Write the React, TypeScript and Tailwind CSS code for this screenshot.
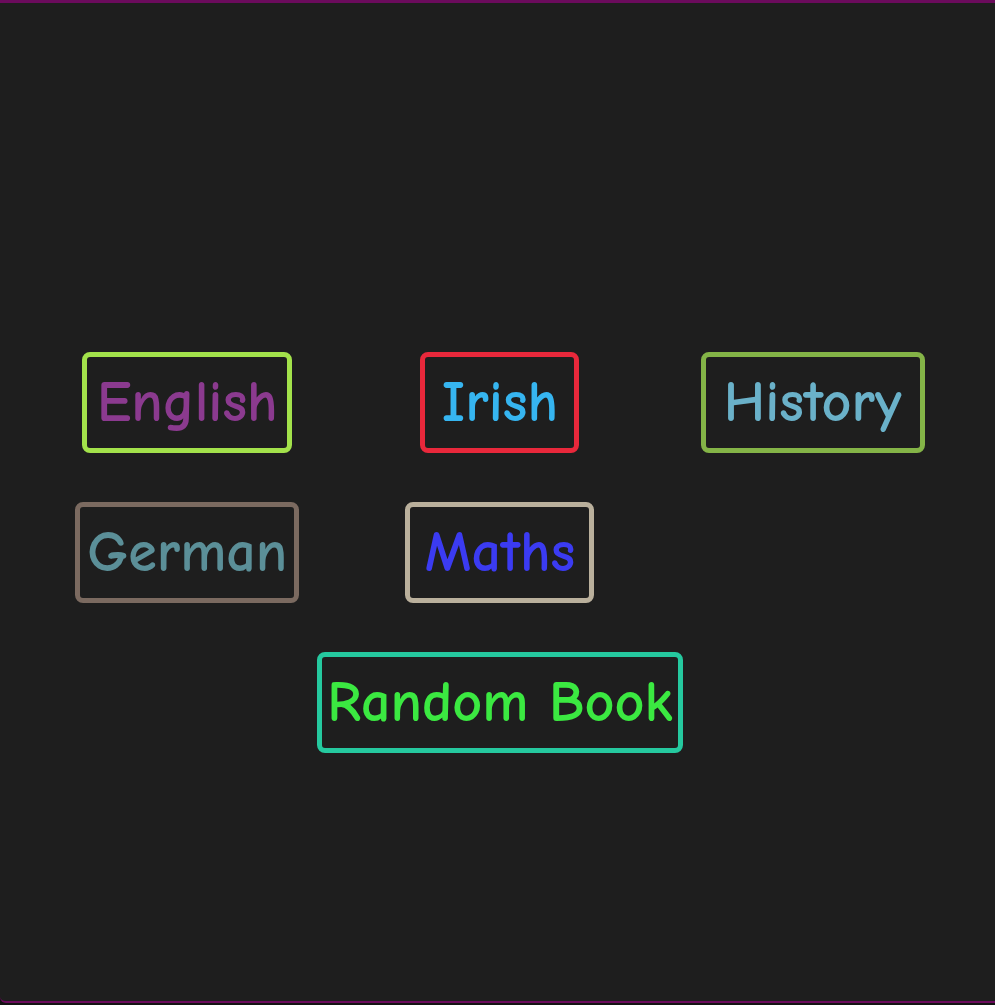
const subjects = [
  { name: 'English', box: 'w-[210px] border-[#a3e24b] text-[#8b3a8f]' },
  { name: 'Irish', box: 'w-[159px] border-[#e9283b] text-[#36b5f0]' },
  { name: 'History', box: 'w-[224px] border-[#84b447] text-[#6ab1c9]' },
  { name: 'German', box: 'w-[224px] border-[#7b6a60] text-[#5b8f98]' },
  { name: 'Maths', box: 'w-[189px] border-[#bab09c] text-[#3b3bf2]' },
]

function SubjectButton({ name, box }: { name: string; box: string }) {
  return (
    <button
      className={`h-[101px] rounded-lg border-[5px] flex items-center justify-center whitespace-nowrap text-[58px] font-bold leading-none ${box}`}
    >
      {name}
    </button>
  )
}

export default function App() {
  return (
    <div
      className="h-[1005px] w-full bg-[#141414]"
      style={{ fontFamily: '"Comic Sans MS", "Comic Neue", "Noto Sans", sans-serif' }}
    >
      <div className="h-[1003px] bg-[#1e1e1e] border-t-[3px] border-b-2 border-[#6b0b5c] rounded-bl-md pt-[349px]">
        <div className="ml-[31px] w-[938px] grid grid-cols-3 gap-y-[49px] justify-items-center">
          {subjects.map((s) => (
            <SubjectButton key={s.name} name={s.name} box={s.box} />
          ))}
          <div className="col-span-3">
            <SubjectButton name="Random Book" box="w-[366px] border-[#25c99f] text-[#3be941]" />
          </div>
        </div>
      </div>
    </div>
  )
}
